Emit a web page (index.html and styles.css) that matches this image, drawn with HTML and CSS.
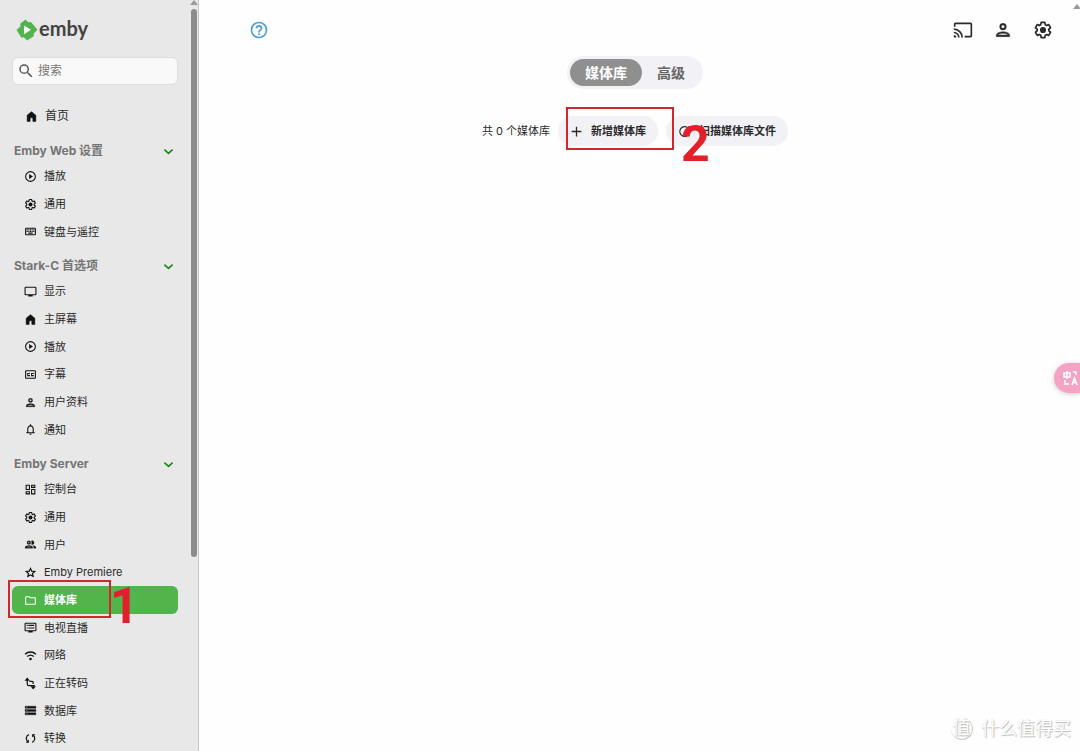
FILE: index.html
```html
<!DOCTYPE html>
<html lang="zh-CN">
<head>
<meta charset="utf-8">
<title>Emby</title>
<link rel="stylesheet" href="styles.css">
</head>
<body>
<svg class="sprite" aria-hidden="true">
  <symbol id="home" viewBox="0 0 24 24"><path d="M4 21V9.500L12 3l8 6.500V21h-5.500v-6.500h-5V21z" stroke="currentColor" stroke-width="1" stroke-linejoin="round"/></symbol>
  <symbol id="play" viewBox="0 0 24 24"><path d="M12 2a10 10 0 1 0 0 20 10 10 0 0 0 0-20zm0 18a8 8 0 1 1 0-16 8 8 0 0 1 0 16zM9.500 16.500l7-4.500-7-4.500z"/></symbol>
  <symbol id="gear" viewBox="-1 -1 26 26"><path d="M19.430 12.980c.040-.320.070-.640.070-.980s-.030-.660-.070-.980l2.110-1.650c.190-.150.240-.420.120-.640l-2-3.460a.5.5 0 0 0-.610-.220l-2.490 1c-.520-.400-1.080-.730-1.690-.980l-.380-2.650A.49.49 0 0 0 14 2h-4a.49.49 0 0 0-.490.420l-.380 2.650c-.610.250-1.170.590-1.690.980l-2.490-1a.5.5 0 0 0-.610.220l-2 3.460c-.130.220-.070.490.120.640l2.110 1.650c-.040.320-.070.650-.070.980s.030.660.070.980l-2.110 1.650c-.190.150-.240.420-.120.640l2 3.460c.120.220.390.300.610.220l2.490-1c.520.400 1.080.730 1.690.980l.380 2.650c.030.240.240.420.490.420h4c.250 0 .460-.180.490-.420l.380-2.650c.610-.250 1.170-.590 1.690-.980l2.490 1c.230.090.490 0 .610-.220l2-3.460a.5.5 0 0 0-.120-.640z" fill="none" stroke="currentColor" stroke-width="2.200"/><circle cx="12" cy="12" r="4"/></symbol>
  <symbol id="keyboard" viewBox="0 0 24 24"><path d="M20 5H4a2 2 0 0 0-2 2v10c0 1.100.9 2 2 2h16a2 2 0 0 0 2-2V7a2 2 0 0 0-2-2zm0 12H4V7h16zM11 8h2v2h-2zm0 3h2v2h-2zM8 8h2v2H8zm0 3h2v2H8zm-3 0h2v2H5zm0-3h2v2H5zm3 6h8v2H8zm6-3h2v2h-2zm0-3h2v2h-2zm3 3h2v2h-2zm0-3h2v2h-2z"/></symbol>
  <symbol id="display" viewBox="0 0 24 24"><path d="M21 3H3a2 2 0 0 0-2 2v12c0 1.100.9 2 2 2h5v2h8v-2h5a2 2 0 0 0 2-2V5a2 2 0 0 0-2-2zm0 14H3V5h18z"/></symbol>
  <symbol id="caption" viewBox="0 0 24 24"><path d="M20 4H4a2 2 0 0 0-2 2v12c0 1.100.9 2 2 2h16a2 2 0 0 0 2-2V6a2 2 0 0 0-2-2zm0 14H4V6h16zM6 9h5v2H7.500v2H11v2H6zm7 0h5v2h-3.500v2H18v2h-5z"/></symbol>
  <symbol id="person" viewBox="0 0 24 24"><path d="M12 6a2 2 0 1 1 0 4 2 2 0 0 1 0-4m0 10c2.700 0 5.800 1.290 6 2H6c.230-.720 3.310-2 6-2m0-12a4 4 0 1 0 0 8 4 4 0 0 0 0-8zm0 10c-2.670 0-8 1.340-8 4v2h16v-2c0-2.660-5.330-4-8-4z" stroke="currentColor" stroke-width=".5"/></symbol>
  <symbol id="bell" viewBox="0 0 24 24"><path d="M12 22a2 2 0 0 0 2-2h-4c0 1.100.9 2 2 2zm6-6v-5c0-3.070-1.630-5.640-4.500-6.320V4a1.500 1.500 0 0 0-3 0v.680C7.640 5.360 6 7.920 6 11v5l-2 2v1h16v-1zm-2 1H8v-6c0-2.480 1.510-4.500 4-4.500s4 2.020 4 4.500z"/></symbol>
  <symbol id="dashboard" viewBox="0 0 24 24"><path d="M3 3h8v10H3zm2 2v6h4V5zm8-2h8v6h-8zm2 2v2h4V5zm-2 6h8v10h-8zm2 2v6h4v-6zM3 15h8v6H3zm2 2v2h4v-2z" fill-rule="evenodd"/></symbol>
  <symbol id="people" viewBox="0 0 24 24"><path d="M9 5a3.500 3.500 0 1 0 0 7 3.500 3.500 0 0 0 0-7zm0 5a1.500 1.500 0 1 1 0-3 1.500 1.500 0 0 1 0 3zm0 3.750c-2.340 0-7 1.170-7 3.500V19h14v-1.750c0-2.330-4.660-3.500-7-3.500zM4.340 17c.840-.580 2.870-1.250 4.660-1.250s3.820.670 4.660 1.250zm11.700-3.190c1.160.840 1.960 1.960 1.960 3.440V19h4v-1.750c0-2.020-3.500-3.170-5.960-3.440zM15 12a3.500 3.500 0 1 0-1.500-6.660 5.480 5.480 0 0 1 0 6.320c.450.220.960.340 1.500.340z" stroke="currentColor" stroke-width=".5"/></symbol>
  <symbol id="star" viewBox="0 0 24 24"><path d="M12 4.500l2.300 5 5.500.600-4.100 3.700 1.200 5.400-4.900-2.800-4.900 2.800 1.200-5.400-4.100-3.700 5.500-.6z" fill="none" stroke="currentColor" stroke-width="2.200"/></symbol>
  <symbol id="folder" viewBox="0 0 24 24"><path d="M9.170 6l2 2H20v10H4V6zM10 4H4a2 2 0 0 0-2 2v12c0 1.100.9 2 2 2h16a2 2 0 0 0 2-2V8a2 2 0 0 0-2-2h-8z"/></symbol>
  <symbol id="livetv" viewBox="0 0 24 24"><path d="M21 3H3a2 2 0 0 0-2 2v12c0 1.100.9 2 2 2h5v2h8v-2h5a2 2 0 0 0 2-2V5a2 2 0 0 0-2-2zm0 14H3V5h18zM8 7h11v2H8zm0 5h11v2H8zM5 7h2v2H5zm0 5h2v2H5z"/></symbol>
  <symbol id="wifi" viewBox="0 0 24 24"><path d="M2 9.500a14.500 14.500 0 0 1 20 0M6 14a9 9 0 0 1 12 0" fill="none" stroke="currentColor" stroke-width="2.600"/><circle cx="12" cy="18.500" r="2.400"/></symbol>
  <symbol id="transcode" viewBox="0 0 24 24"><path d="M6 4v9a3 3 0 0 0 3 3h11M10 8h5a2 2 0 0 1 2 2v3" fill="none" stroke="currentColor" stroke-width="2.200"/><path d="M1 7l5-6 5 6zM12 17l5 6 5-6z"/></symbol>
  <symbol id="storage" viewBox="0 0 24 24"><path d="M2 20h20v-4H2zm2-3h2v2H4zM2 4v4h20V4zm4 3H4V5h2zm-4 7h20v-4H2zm2-3h2v2H4z" stroke="currentColor" stroke-width=".6"/></symbol>
  <symbol id="convert" viewBox="0 0 24 24"><path d="M9 5C3 7 3 15 7 18M15 19c6-2 6-10 2-13" fill="none" stroke="currentColor" stroke-width="2.300"/><path d="M3 20h6v-6zM21 4h-6v6z"/></symbol>
  <symbol id="search" viewBox="0 0 24 24"><path d="M15.500 14h-.790l-.280-.270A6.470 6.470 0 0 0 16 9.500 6.500 6.500 0 1 0 9.500 16c1.610 0 3.090-.590 4.230-1.570l.270.280v.790l5 4.990L20.490 19zm-6 0a4.500 4.500 0 1 1 0-9 4.500 4.500 0 0 1 0 9z"/></symbol>
  <symbol id="chevron" viewBox="0 0 24 24"><path d="M3 8l9 8 9-8" fill="none" stroke="currentColor" stroke-width="3.600"/></symbol>
  <symbol id="cast" viewBox="0 0 24 24"><path d="M21 3H3a2 2 0 0 0-2 2v3h2V5h18v14h-7v2h7a2 2 0 0 0 2-2V5a2 2 0 0 0-2-2zM1 18v3h3a3 3 0 0 0-3-3zm0-4v2a5 5 0 0 1 5 5h2a7 7 0 0 0-7-7zm0-4v2a9 9 0 0 1 9 9h2A11 11 0 0 0 1 10z"/></symbol>
  <symbol id="help" viewBox="0 0 24 24"><path d="M11 18h2v-2h-2zm1-16a10 10 0 1 0 0 20 10 10 0 0 0 0-20zm0 18a8 8 0 1 1 0-16 8 8 0 0 1 0 16zm0-14a4 4 0 0 0-4 4h2a2 2 0 1 1 4 0c0 2-3 1.750-3 5h2c0-2.250 3-2.500 3-5a4 4 0 0 0-4-4z"/></symbol>
  <symbol id="plus" viewBox="0 0 24 24"><path d="M12 3v18M3 12h18" stroke="currentColor" stroke-width="2.400"/></symbol>
  <symbol id="refresh" viewBox="0 0 24 24"><path d="M19 6a9 9 0 1 0 2 8M20 2v7h-7" fill="none" stroke="currentColor" stroke-width="2.200"/></symbol>
</svg>

<div class="app">
  <aside class="sidebar">
    <div class="sidebar-content">
      <a class="logo" href="#">
        <svg class="logo-mark" viewBox="0 0 22 22"><path d="M9.500 .5l3.200 3 2-.8 6.800 8-3.800 3.800.2 2.500-6.700 4.500-3.400-3.300-2.300.5L.5 11l4-3.700-.3-2.600z" fill="#52b54b"/><path d="M8 6.500l7 4.300-7 4.400z" fill="#fff"/></svg>
        <span>emby</span>
      </a>
      <label class="search"><svg class="search-icon"><use href="#search"/></svg><input type="search" placeholder="搜索" aria-label="搜索"></label>
      <nav>
        <a class="item home" href="#"><svg class="icon"><use href="#home"/></svg>首页</a>
        <section class="group">
          <button class="heading">Emby Web 设置<svg class="chevron"><use href="#chevron"/></svg></button>
          <a class="item" href="#"><svg class="icon"><use href="#play"/></svg>播放</a>
          <a class="item" href="#"><svg class="icon"><use href="#gear"/></svg>通用</a>
          <a class="item" href="#"><svg class="icon"><use href="#keyboard"/></svg>键盘与遥控</a>
        </section>
        <section class="group">
          <button class="heading">Stark-C 首选项<svg class="chevron"><use href="#chevron"/></svg></button>
          <a class="item" href="#"><svg class="icon"><use href="#display"/></svg>显示</a>
          <a class="item" href="#"><svg class="icon"><use href="#home"/></svg>主屏幕</a>
          <a class="item" href="#"><svg class="icon"><use href="#play"/></svg>播放</a>
          <a class="item" href="#"><svg class="icon"><use href="#caption"/></svg>字幕</a>
          <a class="item" href="#"><svg class="icon"><use href="#person"/></svg>用户资料</a>
          <a class="item" href="#"><svg class="icon"><use href="#bell"/></svg>通知</a>
        </section>
        <section class="group">
          <button class="heading">Emby Server<svg class="chevron"><use href="#chevron"/></svg></button>
          <a class="item" href="#"><svg class="icon"><use href="#dashboard"/></svg>控制台</a>
          <a class="item" href="#"><svg class="icon"><use href="#gear"/></svg>通用</a>
          <a class="item" href="#"><svg class="icon"><use href="#people"/></svg>用户</a>
          <a class="item" href="#"><svg class="icon"><use href="#star"/></svg>Emby Premiere</a>
          <a class="item active" href="#"><svg class="icon"><use href="#folder"/></svg>媒体库<span class="mark mark-one"><b>1</b></span></a>
          <a class="item" href="#"><svg class="icon"><use href="#livetv"/></svg>电视直播</a>
          <a class="item" href="#"><svg class="icon"><use href="#wifi"/></svg>网络</a>
          <a class="item" href="#"><svg class="icon"><use href="#transcode"/></svg>正在转码</a>
          <a class="item" href="#"><svg class="icon"><use href="#storage"/></svg>数据库</a>
          <a class="item" href="#"><svg class="icon"><use href="#convert"/></svg>转换</a>
        </section>
      </nav>
    </div>
    <div class="scrollbar"><i class="arrow"></i><i class="thumb"></i></div>
  </aside>

  <main class="main">
    <header class="topbar">
      <button class="tool help" aria-label="帮助"><svg><use href="#help"/></svg></button>
      <div class="tools">
        <button class="tool" aria-label="投放"><svg><use href="#cast"/></svg></button>
        <button class="tool" aria-label="用户"><svg><use href="#person"/></svg></button>
        <button class="tool" aria-label="设置"><svg><use href="#gear"/></svg></button>
      </div>
    </header>
    <div class="tabs">
      <button class="tab selected">媒体库</button>
      <button class="tab">高级</button>
    </div>
    <div class="actions">
      <span class="count">共 0 个媒体库</span>
      <button class="action"><svg class="action-icon"><use href="#plus"/></svg>新增媒体库<span class="mark mark-two"><b>2</b></span></button>
      <button class="action"><svg class="action-icon"><use href="#refresh"/></svg>扫描媒体库文件</button>
    </div>
  </main>
</div>
<i class="arrow page-arrow"></i>
<button class="translate" aria-label="翻译"><svg viewBox="0 0 16 16"><path d="M1 3h6v4H1zM4 1v8M10 2h3v3M2 10v4h4M9 15l2.500-7 2.500 7M10 12.500h3.500" fill="none" stroke="#fff" stroke-width="1.500"/></svg></button>
<div class="watermark"><span class="seal">值</span><span>什么值得买</span></div>
</body>
</html>
```

FILE: styles.css
```css
* { box-sizing: border-box; }
body {
  margin: 0;
  overflow: hidden;
  background: #fefefe;
  color: #2a2a2a;
  font: 11px/16px Inter, "Noto Sans CJK SC", sans-serif;
}
button { border: 0; padding: 0; background: none; color: inherit; font: inherit; }
a { color: inherit; text-decoration: none; }
svg { display: block; flex: none; fill: currentColor; }
.sprite { position: absolute; width: 0; height: 0; }
.app { display: flex; height: 100vh; }

.sidebar { display: flex; width: 199px; flex: none; background: #e8e8e8; border-right: 1px solid #c8c8c8; overflow: hidden; }
.sidebar-content { flex: 1; min-width: 0; padding: 16px 12px 0; }
.logo { display: flex; align-items: center; gap: 1px; height: 27px; padding-left: 4px; color: #444; font: 700 20px/24px Lato, sans-serif; }
.logo span { padding-bottom: 3px; }
.logo-mark { width: 22px; height: 22px; }
.search { display: flex; align-items: center; gap: 3px; height: 28px; margin-top: 14px; padding: 0 4px; border: 1px solid #dcdcdc; border-radius: 6px; background: #f9f9f9; }
.search-icon { width: 18px; height: 18px; color: #555; }
.search input { flex: 1; min-width: 0; border: 0; padding: 0; outline: 0; background: none; font: inherit; font-size: 12px; }
.search input::placeholder { color: #777; }
.item { display: flex; align-items: center; gap: 7px; height: 28px; padding-left: 12px; border-radius: 6px; white-space: nowrap; }
.icon { width: 13px; height: 13px; color: #111; }
.home { margin-top: 17px; padding-left: 13px; font-size: 12px; }
.group { margin-top: 8px; }
.heading { display: flex; align-items: center; justify-content: space-between; width: 100%; height: 24px; padding: 2px 4px 0 2px; color: #757575; font-size: 12px; font-weight: 700; }
.chevron { width: 11px; height: 11px; color: #198a19; }
.group .item:nth-of-type(3n) { height: 27px; }
.active { position: relative; background: #52b54b; color: #fff; font-weight: 600; }
.active .icon { color: #fff; }
.scrollbar { display: flex; flex-direction: column; align-items: center; gap: 4px; width: 8px; }
.arrow { border: 4px solid transparent; border-top: 0; border-bottom: 5px solid #999; }
.thumb { width: 6px; height: 73vh; border-radius: 3px; background: #8c8c8c; }

.main { flex: 1; padding-right: 9px; }
.topbar { display: flex; align-items: center; justify-content: space-between; height: 56px; padding: 3px 18px 0 50px; }
.tools { display: flex; gap: 20px; }
.tool svg { width: 20px; height: 20px; }
.help { color: #4aa0d8; }
.tabs { display: flex; width: max-content; margin: 0 auto; padding: 3px; border-radius: 17px; background: #f2f1f6; color: #666; font-size: 14px; font-weight: 700; }
.tab { height: 27px; padding: 0 15px; border-radius: 14px; }
.selected { background: #8f8f8f; color: #fff; }
.actions { display: flex; align-items: center; justify-content: center; gap: 8px; margin-top: 27px; }
.action { position: relative; display: flex; align-items: center; gap: 8px; height: 30px; padding: 0 12px; border-radius: 15px; background: #f2f1f6; font-weight: 700; }
.action-icon { width: 13px; height: 13px; }

/* Red call-outs drawn over the controls */
.mark { position: absolute; z-index: 1; border: 2px solid #d3262d; }
.mark b { position: absolute; color: #e3202a; font: 700 50px/50px Roboto, sans-serif; }
.mark-one { left: -4px; top: -6px; width: 103px; height: 38px; }
.mark-one b { left: 100px; top: -1px; }
.mark-two { left: 8px; top: -9px; width: 108px; height: 43px; }
.mark-two b { left: 113px; top: 10px; }

.page-arrow { position: absolute; right: -1px; top: 4px; }
.translate { position: absolute; right: 0; top: 363px; width: 26px; height: 30px; padding-left: 9px; border-radius: 15px 0 0 15px; background: #f5a3c4; box-shadow: 0 1px 5px #0003; }
.translate svg { width: 16px; height: 16px; }
.watermark { position: absolute; right: 9px; bottom: 10px; display: flex; align-items: center; gap: 8px; color: #fff; font-size: 18px; line-height: 24px; text-shadow: 1px 1px 1px #bbb, 0 0 1px #ccc; }
.seal { width: 22px; height: 22px; border-radius: 50%; border-right: 1px solid #ccc; border-bottom: 1px solid #ccc; line-height: 20px; text-align: center; }
```
